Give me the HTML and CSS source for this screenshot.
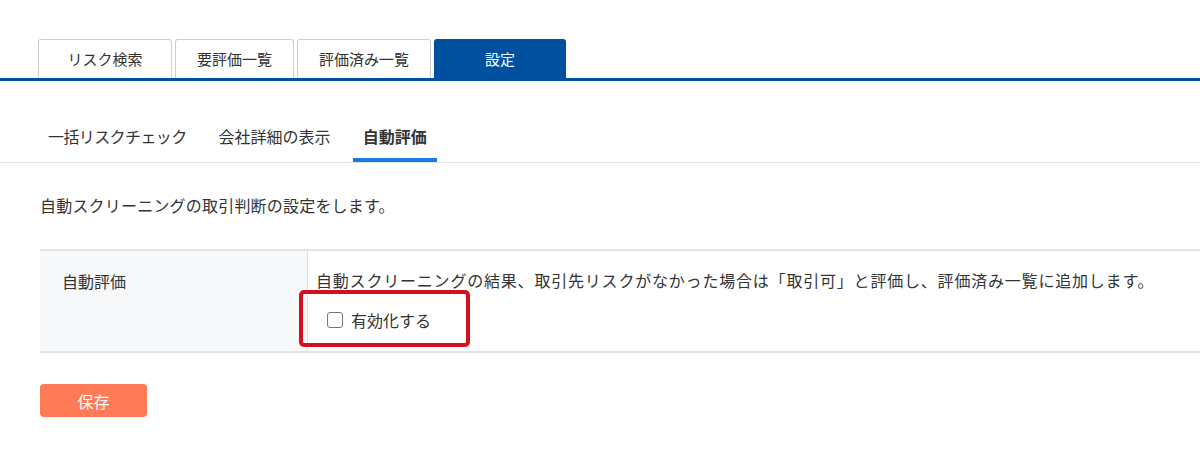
FILE: index.html
```html
<!DOCTYPE html>
<html lang="ja">
<head>
<meta charset="utf-8">
<link rel="stylesheet" href="styles.css">
</head>
<body>
<div class="main-tabs">
  <div class="main-tab">リスク検索</div>
  <div class="main-tab">要評価一覧</div>
  <div class="main-tab">評価済み一覧</div>
  <div class="main-tab active">設定</div>
</div>
<div class="sub-tabs">
  <div class="sub-tab narrow">一括リスクチェック</div>
  <div class="sub-tab">会社詳細の表示</div>
  <div class="sub-tab active">自動評価</div>
</div>
<div class="content">
  <p class="desc">自動スクリーニングの取引判断の設定をします。</p>
  <div class="setting-row">
    <div class="setting-label">自動評価</div>
    <div class="setting-body">
      <div class="setting-text">自動スクリーニングの結果、取引先リスクがなかった場合は「取引可」と評価し、評価済み一覧に追加します。</div>
      <label class="check">
        <span class="box"></span>
        <span>有効化する</span>
      </label>
      <span class="highlight"></span>
    </div>
  </div>
  <button class="save">保存</button>
</div>
</body>
</html>
```

FILE: styles.css
```css
* { box-sizing: border-box; }
body {
  margin: 0;
  font-family: "Noto Sans CJK JP", "Noto Sans", sans-serif;
  color: #333;
  background: #fff;
}
.main-tabs {
  display: flex;
  gap: 3px;
  padding: 39px 0 0 38px;
  border-bottom: 3px solid #0050a0;
}
.main-tab {
  height: 39px;
  padding: 0;
  border: 1px solid #cfcfcf;
  border-bottom: none;
  border-radius: 3px 3px 0 0;
  font-size: 15px;
  line-height: 38px;
  color: #333;
  background: #fff;
  text-align: center;
  white-space: nowrap;
}
.main-tab:nth-child(1) { width: 134px; }
.main-tab:nth-child(2) { width: 119px; }
.main-tab:nth-child(3) { width: 134px; }
.main-tab.active {
  width: 132px;
  background: #0050a0;
  border-color: #0050a0;
  color: #fff;
}
.sub-tabs {
  display: flex;
  gap: 12px;
  padding: 40px 0 0 38px;
  border-bottom: 1px solid #e3e3e3;
}
.sub-tab {
  padding: 0 10px;
  height: 41px;
  font-size: 16px;
  line-height: 30px;
  color: #333;
  white-space: nowrap;
  border-bottom: 4px solid transparent;
}
.sub-tab.narrow { letter-spacing: -0.6px; }
.sub-tab.active {
  font-weight: bold;
  border-bottom-color: #1a7ae0;
}
.content {
  padding: 0 0 0 40px;
}
.desc {
  margin: 30px 0 0;
  font-size: 16px;
  line-height: 24px;
  letter-spacing: 0.2px;
}
.setting-row {
  display: flex;
  margin-top: 32px;
  border-top: 2px solid #e3e3e3;
  border-bottom: 2px solid #e3e3e3;
  height: 104px;
}
.setting-label {
  width: 268px;
  background: #f7f8fa;
  border-right: 1px solid #e3e3e3;
  padding: 18px 22px;
  font-size: 16px;
  line-height: 24px;
}
.setting-body {
  position: relative;
  flex: 1;
  padding: 17px 0 0 8px;
  font-size: 16px;
  line-height: 24px;
}
.setting-text { letter-spacing: 0.8px; }
.check {
  display: flex;
  align-items: center;
  gap: 8px;
  margin: 16px 0 0 11px;
  font-size: 16px;
}
.box {
  width: 16px;
  height: 16px;
  border: 1px solid #767676;
  border-radius: 3px;
  background: #fff;
}
.highlight {
  position: absolute;
  left: -9px;
  top: 39px;
  width: 171px;
  height: 57px;
  border: 4px solid #d4101e;
  border-radius: 5px;
}
.save {
  display: block;
  margin-top: 31px;
  width: 107px;
  height: 33px;
  border: none;
  border-radius: 4px;
  background: #ff7a57;
  color: #fff;
  font-family: inherit;
  font-size: 16px;
}
```
